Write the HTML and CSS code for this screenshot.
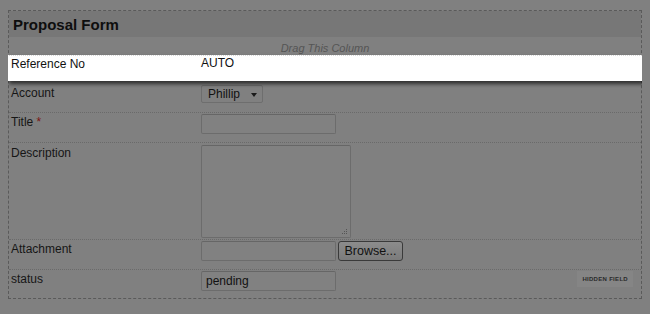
FILE: index.html
```html
<!DOCTYPE html>
<html lang="en">
<head>
  <meta charset="UTF-8">
  <title>Proposal Form</title>
  <link rel="stylesheet" href="styles.css">
</head>
<body>
  <div class="form">
    <div class="form-head">Proposal Form</div>
    <div class="drag-hint">Drag This Column</div>

    <div class="row row-drag">
      <div class="label">Reference No</div>
      <div class="field">AUTO</div>
    </div>

    <div class="row row-account">
      <div class="label">Account</div>
      <div class="field">
        <div class="select">Phillip <span class="caret"></span></div>
      </div>
    </div>

    <div class="row">
      <div class="label">Title <span class="req">*</span></div>
      <div class="field"><input type="text" class="text"></div>
    </div>

    <div class="row row-desc">
      <div class="label">Description</div>
      <div class="field">
        <div class="area-wrap">
          <textarea class="area"></textarea>
          <svg class="grip" width="6" height="6" viewBox="0 0 6 6">
            <rect x="4" y="0" width="1" height="1" fill="#555"/>
            <rect x="2" y="2" width="1" height="1" fill="#555"/>
            <rect x="4" y="2" width="1" height="1" fill="#555"/>
            <rect x="0" y="4" width="1" height="1" fill="#555"/>
            <rect x="2" y="4" width="1" height="1" fill="#555"/>
            <rect x="4" y="4" width="1" height="1" fill="#555"/>
          </svg>
        </div>
      </div>
    </div>

    <div class="row">
      <div class="label">Attachment</div>
      <div class="field file">
        <input type="text" class="text">
        <button class="browse">Browse...</button>
      </div>
    </div>

    <div class="row row-last">
      <div class="label">status</div>
      <div class="field"><input type="text" class="text" value="pending"></div>
      <div class="badge">HIDDEN FIELD</div>
    </div>
  </div>
</body>
</html>
```

FILE: styles.css
```css
body {
  margin: 8px;
  margin-top: 10px;
  background-color: #808080;
  font-family: "Liberation Sans", Arial, sans-serif;
  font-size: 12px;
  color: #161616;
}

.form {
  border: 1px dashed #5a5a5a;
}

.form-head {
  height: 25px;
  padding-top: 1px;
  line-height: 26px;
  padding-left: 4px;
  background-color: #777777;
  font-size: 15px;
  font-weight: bold;
  color: #0e0e0e;
}

.drag-hint {
  height: 13px;
  padding-top: 5px;
  line-height: 13px;
  text-align: center;
  font-size: 11px;
  font-style: italic;
  color: #555555;
}

.row {
  display: grid;
  grid-template-columns: 190px 1fr auto;
  padding: 1px 0 8px 2px;
  border-bottom: 1px dotted #6a6a6a;
}

.label {
  line-height: 16px;
}

.req {
  color: #7a1414;
}

.row-drag {
  position: relative;
  z-index: 2;
  height: 25px;
  padding: 0 0 0 4px;
  margin: 0 -1px 0 -2px;
  background-color: #ffffff;
  border-top: 1px dotted #d8d8d8;
  border-bottom: none;
  box-shadow: 2px 3px 4px rgba(0, 0, 0, 0.65);
  color: #111;
}

.row-account {
  padding-top: 4px;
  padding-bottom: 9px;
}

.row-desc {
  padding-top: 2px;
  padding-bottom: 1px;
}

.row-last {
  padding-bottom: 7px;
  border-bottom: none;
}

.select {
  width: 54px;
  height: 16px;
  padding-left: 6px;
  line-height: 16px;
  border: 1px solid #6e6e6e;
  border-radius: 2px;
  font-size: 12px;
  position: relative;
  color: #111;
}

.caret {
  position: absolute;
  right: 5px;
  top: 7px;
  border-left: 3px solid transparent;
  border-right: 3px solid transparent;
  border-top: 4px solid #1a1a1a;
}

.text {
  box-sizing: border-box;
  width: 135px;
  height: 20px;
  margin: 0;
  padding: 1px 4px;
  border: 1px solid #6c6c6c;
  border-top-color: #666666;
  border-radius: 2px;
  background-color: #818181;
  font-family: "Liberation Sans", Arial, sans-serif;
  font-size: 12px;
  color: #111;
  outline: none;
}

.area-wrap {
  position: relative;
  width: 150px;
  height: 93px;
}

.area {
  box-sizing: border-box;
  width: 150px;
  height: 93px;
  margin: 0;
  border: 1px solid #6c6c6c;
  border-top-color: #666666;
  border-radius: 2px;
  background-color: #818181;
  resize: none;
  outline: none;
}

.grip {
  position: absolute;
  right: 3px;
  bottom: 3px;
}

.file {
  display: flex;
  align-items: center;
  gap: 2px;
}

.browse {
  width: 65px;
  height: 20px;
  padding: 0;
  border: 1px solid #3a3a3a;
  border-radius: 3px;
  background: linear-gradient(#8c8c8c, #7b7b7b);
  font-family: "Liberation Sans", Arial, sans-serif;
  font-size: 12.5px;
  color: #111;
}

.badge {
  align-self: start;
  margin-right: 8px;
  padding: 0 5px;
  height: 16px;
  line-height: 17px;
  background-color: #858585;
  font-size: 6px;
  font-weight: bold;
  letter-spacing: 0.3px;
  color: #2a2a2a;
}
```
